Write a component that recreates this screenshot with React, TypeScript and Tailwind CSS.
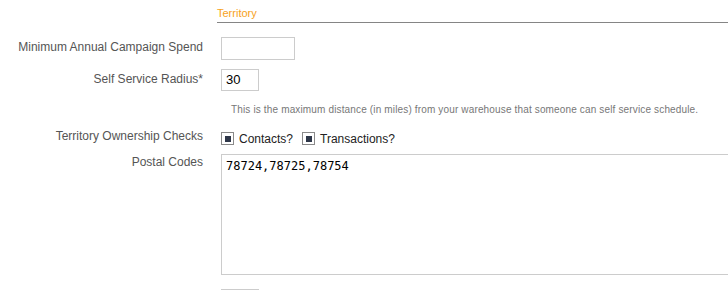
import React from "react";

function Check({ label }: { label: string }) {
  return (
    <div className="flex items-start">
      <div className="mt-[4px] flex h-[13px] w-[13px] shrink-0 items-center justify-center border border-[#8a8a8a] bg-white">
        <div className="h-[6px] w-[6px] bg-[#2e3749]" />
      </div>
      <span className="ml-[5px] mt-[3px] text-[12px] leading-[16px] text-[#222]">{label}</span>
    </div>
  );
}

export default function App() {
  return (
    <div
      className="h-[290px] w-[728px] overflow-hidden bg-white"
      style={{ fontFamily: '"Liberation Sans", Arial, sans-serif' }}
    >
      <div className="ml-[217px] border-b border-[#858585] pb-[2px] pt-[6px] text-[11px] leading-[14px] text-[#f7a21b]">
        Territory
      </div>

      <div className="mt-[14px] flex">
        <div className="w-[203px] shrink-0 pt-[2px] text-right text-[12px] leading-[16px] text-[#555]">
          Minimum Annual Campaign Spend
        </div>
        <div className="ml-[18px]">
          <div className="h-[23px] w-[74px] border border-[#cccccc] bg-white" />
        </div>
      </div>

      <div className="mt-[9px] flex">
        <div className="w-[203px] shrink-0 pt-[2px] text-right text-[12px] leading-[16px] text-[#555]">
          Self Service Radius*
        </div>
        <div className="ml-[18px]">
          <div className="flex h-[22px] w-[38px] items-center border border-[#cccccc] bg-white pl-[4px] text-[13px] leading-[16px] text-black">
            30
          </div>
        </div>
      </div>

      <div className="ml-[231px] mt-[13px] text-[10px] leading-[12px] tracking-[0.15px] text-[#777]">
        This is the maximum distance (in miles) from your warehouse that someone can self service schedule.
      </div>

      <div className="mt-[12px] flex">
        <div className="w-[203px] shrink-0 text-right text-[12px] leading-[16px] text-[#555]">
          Territory Ownership Checks
        </div>
        <div className="ml-[18px] flex gap-[9px]">
          <Check label="Contacts?" />
          <Check label="Transactions?" />
        </div>
      </div>

      <div className="mt-[7px] flex">
        <div className="w-[203px] shrink-0 text-right text-[12px] leading-[16px] text-[#555]">
          Postal Codes
        </div>
        <div className="ml-[18px] shrink-0">
          <div
            className="h-[121px] w-[560px] border border-[#cccccc] bg-white px-[4px] pt-[3px] text-[12px] leading-[16px] text-black"
            style={{ fontFamily: '"DejaVu Sans Mono", monospace' }}
          >
            78724,78725,78754
          </div>
        </div>
      </div>

      <div className="ml-[221px] mt-[14px] h-[22px] w-[38px] border border-[#cccccc] bg-white" />
    </div>
  );
}
